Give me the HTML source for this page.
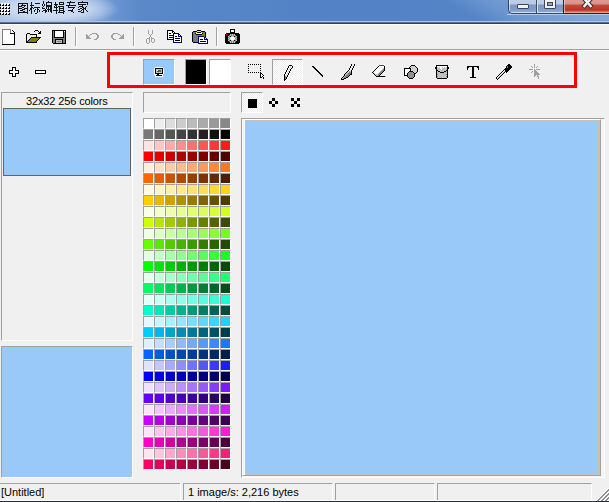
<!DOCTYPE html><html><head><meta charset="utf-8"><style>
html,body{margin:0;padding:0;}body{width:609px;height:502px;overflow:hidden;background:#f0f0f0;position:relative;font-family:"Liberation Sans",sans-serif;}
.t{position:absolute;white-space:nowrap;font-size:11px;color:#000;line-height:13px;}
svg{position:absolute;overflow:visible}.c{position:absolute;width:11px;height:11px;box-sizing:border-box;border-style:solid;border-width:1px;border-color:#a0a0a0 #fff #fff #a0a0a0}
</style></head><body>
<div style="position:absolute;left:0px;top:0px;width:609px;height:21px;background:radial-gradient(ellipse 70px 17px at 50px 9px,rgba(215,228,245,.95) 0%,rgba(205,220,242,.85) 55%,rgba(190,210,238,0) 100%),linear-gradient(90deg,#a9c0e2 0px,#9fb9df 60px,#83a6d8 100px,#6994d0 115px,#5a88c9 140px,#5383c6 300px,#5585c7 609px);"></div>
<div style="position:absolute;left:300px;top:0px;width:309px;height:21px;background:linear-gradient(31deg,rgba(200,220,245,0) 0%,rgba(200,220,245,0) 52%,rgba(200,220,245,.2) 64%,rgba(200,220,245,.36) 82%,rgba(200,220,245,.42) 100%);"></div>
<div style="position:absolute;left:0px;top:21px;width:609px;height:1px;background:#a9c3ea;"></div>
<div style="position:absolute;left:0px;top:22px;width:609px;height:1px;background:#5d7394;"></div>
<div style="position:absolute;left:0px;top:23px;width:609px;height:1px;background:#2d405f;"></div>
<div style="position:absolute;left:0px;top:24px;width:609px;height:1px;background:#ffffff;"></div>
<div style="position:absolute;left:75px;top:27px;width:1px;height:19px;background:#a0a0a0;"></div>
<div style="position:absolute;left:76px;top:27px;width:1px;height:20px;background:#fff;"></div>
<div style="position:absolute;left:133px;top:27px;width:1px;height:19px;background:#a0a0a0;"></div>
<div style="position:absolute;left:134px;top:27px;width:1px;height:20px;background:#fff;"></div>
<div style="position:absolute;left:216px;top:27px;width:1px;height:19px;background:#a0a0a0;"></div>
<div style="position:absolute;left:217px;top:27px;width:1px;height:20px;background:#fff;"></div>
<div style="position:absolute;left:0px;top:49px;width:609px;height:1px;background:#a0a0a0;"></div>
<div style="position:absolute;left:0px;top:50px;width:609px;height:1px;background:#fafafa;"></div>
<div style="position:absolute;left:107px;top:52px;width:470px;height:36px;border:3px solid #ff0000;box-sizing:border-box;"></div>
<div style="position:absolute;left:143px;top:59px;width:31px;height:25px;border-left:1px solid #a0a0a0;border-top:1px solid #a0a0a0;border-right:1px solid #fff;border-bottom:1px solid #fff;box-sizing:border-box;width:32px;height:26px;background:#99c9f9;"></div>
<div style="position:absolute;left:185px;top:59px;width:21px;height:25px;border-left:1px solid #a0a0a0;border-top:1px solid #a0a0a0;border-right:1px solid #fff;border-bottom:1px solid #fff;box-sizing:border-box;width:22px;height:26px;background:#000;"></div>
<div style="position:absolute;left:209px;top:59px;width:21px;height:25px;border-left:1px solid #a0a0a0;border-top:1px solid #a0a0a0;border-right:1px solid #fff;border-bottom:1px solid #fff;box-sizing:border-box;width:22px;height:26px;background:#fff;"></div>
<div style="position:absolute;left:272px;top:59px;width:30px;height:25px;border-left:1px solid #a0a0a0;border-top:1px solid #a0a0a0;border-right:1px solid #fff;border-bottom:1px solid #fff;box-sizing:border-box;width:31px;height:26px;"></div>
<div style="position:absolute;left:273px;top:60px;width:29px;height:24px;background-color:#fff;background-image:linear-gradient(45deg,#ececec 25%,transparent 25%,transparent 75%,#ececec 75%),linear-gradient(45deg,#ececec 25%,transparent 25%,transparent 75%,#ececec 75%);background-size:2px 2px;background-position:0 0,1px 1px;"></div>
<div style="position:absolute;left:1px;top:92px;width:131px;height:248px;border-left:1px solid #a0a0a0;border-top:1px solid #a0a0a0;border-right:1px solid #fff;border-bottom:1px solid #fff;box-sizing:border-box;width:132px;height:249px;"></div>
<div class="t" style="left:26px;top:95px;letter-spacing:-0.13px">32x32 256 colors</div>
<div style="position:absolute;left:3px;top:108px;width:128px;height:68px;background:#99c9f9;border:1px solid #646464;box-sizing:border-box;"></div>
<div style="position:absolute;left:1px;top:346px;width:131px;height:131px;border-left:1px solid #a0a0a0;border-top:1px solid #a0a0a0;border-right:1px solid #fff;border-bottom:1px solid #fff;box-sizing:border-box;width:132px;height:132px;background:#99c9f9;"></div>
<div style="position:absolute;left:143px;top:92px;width:87px;height:20px;border-left:1px solid #a0a0a0;border-top:1px solid #a0a0a0;border-right:1px solid #fff;border-bottom:1px solid #fff;box-sizing:border-box;width:88px;height:21px;"></div>
<i class="c" style="left:143px;top:118px;background:#ffffff"></i>
<i class="c" style="left:154px;top:118px;background:#eeeeee"></i>
<i class="c" style="left:165px;top:118px;background:#dddddd"></i>
<i class="c" style="left:176px;top:118px;background:#cccccc"></i>
<i class="c" style="left:187px;top:118px;background:#bbbbbb"></i>
<i class="c" style="left:198px;top:118px;background:#aaaaaa"></i>
<i class="c" style="left:209px;top:118px;background:#999999"></i>
<i class="c" style="left:220px;top:118px;background:#888888"></i>
<i class="c" style="left:143px;top:129px;background:#777777"></i>
<i class="c" style="left:154px;top:129px;background:#666666"></i>
<i class="c" style="left:165px;top:129px;background:#555555"></i>
<i class="c" style="left:176px;top:129px;background:#444444"></i>
<i class="c" style="left:187px;top:129px;background:#333333"></i>
<i class="c" style="left:198px;top:129px;background:#222222"></i>
<i class="c" style="left:209px;top:129px;background:#111111"></i>
<i class="c" style="left:220px;top:129px;background:#000000"></i>
<i class="c" style="left:143px;top:140px;background:#ffe3e3"></i>
<i class="c" style="left:154px;top:140px;background:#ffc6c6"></i>
<i class="c" style="left:165px;top:140px;background:#ffaaaa"></i>
<i class="c" style="left:176px;top:140px;background:#ff8e8e"></i>
<i class="c" style="left:187px;top:140px;background:#ff7171"></i>
<i class="c" style="left:198px;top:140px;background:#ff5555"></i>
<i class="c" style="left:209px;top:140px;background:#ff3939"></i>
<i class="c" style="left:220px;top:140px;background:#ff1c1c"></i>
<i class="c" style="left:143px;top:151px;background:#ff0000"></i>
<i class="c" style="left:154px;top:151px;background:#e60000"></i>
<i class="c" style="left:165px;top:151px;background:#cc0000"></i>
<i class="c" style="left:176px;top:151px;background:#b20000"></i>
<i class="c" style="left:187px;top:151px;background:#990000"></i>
<i class="c" style="left:198px;top:151px;background:#800000"></i>
<i class="c" style="left:209px;top:151px;background:#660000"></i>
<i class="c" style="left:220px;top:151px;background:#4c0000"></i>
<i class="c" style="left:143px;top:162px;background:#ffeee3"></i>
<i class="c" style="left:154px;top:162px;background:#ffddc6"></i>
<i class="c" style="left:165px;top:162px;background:#ffccaa"></i>
<i class="c" style="left:176px;top:162px;background:#ffbb8e"></i>
<i class="c" style="left:187px;top:162px;background:#ffaa71"></i>
<i class="c" style="left:198px;top:162px;background:#ff9955"></i>
<i class="c" style="left:209px;top:162px;background:#ff8839"></i>
<i class="c" style="left:220px;top:162px;background:#ff771c"></i>
<i class="c" style="left:143px;top:173px;background:#ff6600"></i>
<i class="c" style="left:154px;top:173px;background:#e65c00"></i>
<i class="c" style="left:165px;top:173px;background:#cc5200"></i>
<i class="c" style="left:176px;top:173px;background:#b24700"></i>
<i class="c" style="left:187px;top:173px;background:#993d00"></i>
<i class="c" style="left:198px;top:173px;background:#803300"></i>
<i class="c" style="left:209px;top:173px;background:#662900"></i>
<i class="c" style="left:220px;top:173px;background:#4c1f00"></i>
<i class="c" style="left:143px;top:184px;background:#fff9e3"></i>
<i class="c" style="left:154px;top:184px;background:#fff4c6"></i>
<i class="c" style="left:165px;top:184px;background:#ffeeaa"></i>
<i class="c" style="left:176px;top:184px;background:#ffe88e"></i>
<i class="c" style="left:187px;top:184px;background:#ffe371"></i>
<i class="c" style="left:198px;top:184px;background:#ffdd55"></i>
<i class="c" style="left:209px;top:184px;background:#ffd739"></i>
<i class="c" style="left:220px;top:184px;background:#ffd21c"></i>
<i class="c" style="left:143px;top:195px;background:#ffcc00"></i>
<i class="c" style="left:154px;top:195px;background:#e6b800"></i>
<i class="c" style="left:165px;top:195px;background:#cca300"></i>
<i class="c" style="left:176px;top:195px;background:#b28f00"></i>
<i class="c" style="left:187px;top:195px;background:#997a00"></i>
<i class="c" style="left:198px;top:195px;background:#806600"></i>
<i class="c" style="left:209px;top:195px;background:#665200"></i>
<i class="c" style="left:220px;top:195px;background:#4c3d00"></i>
<i class="c" style="left:143px;top:206px;background:#f9ffe3"></i>
<i class="c" style="left:154px;top:206px;background:#f4ffc6"></i>
<i class="c" style="left:165px;top:206px;background:#eeffaa"></i>
<i class="c" style="left:176px;top:206px;background:#e8ff8e"></i>
<i class="c" style="left:187px;top:206px;background:#e3ff71"></i>
<i class="c" style="left:198px;top:206px;background:#ddff55"></i>
<i class="c" style="left:209px;top:206px;background:#d7ff39"></i>
<i class="c" style="left:220px;top:206px;background:#d2ff1c"></i>
<i class="c" style="left:143px;top:217px;background:#ccff00"></i>
<i class="c" style="left:154px;top:217px;background:#b8e600"></i>
<i class="c" style="left:165px;top:217px;background:#a3cc00"></i>
<i class="c" style="left:176px;top:217px;background:#8fb200"></i>
<i class="c" style="left:187px;top:217px;background:#7a9900"></i>
<i class="c" style="left:198px;top:217px;background:#668000"></i>
<i class="c" style="left:209px;top:217px;background:#526600"></i>
<i class="c" style="left:220px;top:217px;background:#3d4c00"></i>
<i class="c" style="left:143px;top:228px;background:#eeffe3"></i>
<i class="c" style="left:154px;top:228px;background:#ddffc6"></i>
<i class="c" style="left:165px;top:228px;background:#ccffaa"></i>
<i class="c" style="left:176px;top:228px;background:#bbff8e"></i>
<i class="c" style="left:187px;top:228px;background:#aaff71"></i>
<i class="c" style="left:198px;top:228px;background:#99ff55"></i>
<i class="c" style="left:209px;top:228px;background:#88ff39"></i>
<i class="c" style="left:220px;top:228px;background:#77ff1c"></i>
<i class="c" style="left:143px;top:239px;background:#66ff00"></i>
<i class="c" style="left:154px;top:239px;background:#5ce600"></i>
<i class="c" style="left:165px;top:239px;background:#52cc00"></i>
<i class="c" style="left:176px;top:239px;background:#47b200"></i>
<i class="c" style="left:187px;top:239px;background:#3d9900"></i>
<i class="c" style="left:198px;top:239px;background:#338000"></i>
<i class="c" style="left:209px;top:239px;background:#296600"></i>
<i class="c" style="left:220px;top:239px;background:#1f4c00"></i>
<i class="c" style="left:143px;top:250px;background:#e3ffe3"></i>
<i class="c" style="left:154px;top:250px;background:#c6ffc6"></i>
<i class="c" style="left:165px;top:250px;background:#aaffaa"></i>
<i class="c" style="left:176px;top:250px;background:#8eff8e"></i>
<i class="c" style="left:187px;top:250px;background:#71ff71"></i>
<i class="c" style="left:198px;top:250px;background:#55ff55"></i>
<i class="c" style="left:209px;top:250px;background:#39ff39"></i>
<i class="c" style="left:220px;top:250px;background:#1cff1c"></i>
<i class="c" style="left:143px;top:261px;background:#00ff00"></i>
<i class="c" style="left:154px;top:261px;background:#00e600"></i>
<i class="c" style="left:165px;top:261px;background:#00cc00"></i>
<i class="c" style="left:176px;top:261px;background:#00b200"></i>
<i class="c" style="left:187px;top:261px;background:#009900"></i>
<i class="c" style="left:198px;top:261px;background:#008000"></i>
<i class="c" style="left:209px;top:261px;background:#006600"></i>
<i class="c" style="left:220px;top:261px;background:#004c00"></i>
<i class="c" style="left:143px;top:272px;background:#e3ffee"></i>
<i class="c" style="left:154px;top:272px;background:#c6ffdd"></i>
<i class="c" style="left:165px;top:272px;background:#aaffcc"></i>
<i class="c" style="left:176px;top:272px;background:#8effbb"></i>
<i class="c" style="left:187px;top:272px;background:#71ffaa"></i>
<i class="c" style="left:198px;top:272px;background:#55ff99"></i>
<i class="c" style="left:209px;top:272px;background:#39ff88"></i>
<i class="c" style="left:220px;top:272px;background:#1cff77"></i>
<i class="c" style="left:143px;top:283px;background:#00ff66"></i>
<i class="c" style="left:154px;top:283px;background:#00e65c"></i>
<i class="c" style="left:165px;top:283px;background:#00cc52"></i>
<i class="c" style="left:176px;top:283px;background:#00b247"></i>
<i class="c" style="left:187px;top:283px;background:#00993d"></i>
<i class="c" style="left:198px;top:283px;background:#008033"></i>
<i class="c" style="left:209px;top:283px;background:#006629"></i>
<i class="c" style="left:220px;top:283px;background:#004c1f"></i>
<i class="c" style="left:143px;top:294px;background:#e3fff9"></i>
<i class="c" style="left:154px;top:294px;background:#c6fff4"></i>
<i class="c" style="left:165px;top:294px;background:#aaffee"></i>
<i class="c" style="left:176px;top:294px;background:#8effe8"></i>
<i class="c" style="left:187px;top:294px;background:#71ffe3"></i>
<i class="c" style="left:198px;top:294px;background:#55ffdd"></i>
<i class="c" style="left:209px;top:294px;background:#39ffd7"></i>
<i class="c" style="left:220px;top:294px;background:#1cffd2"></i>
<i class="c" style="left:143px;top:305px;background:#00ffcc"></i>
<i class="c" style="left:154px;top:305px;background:#00e6b8"></i>
<i class="c" style="left:165px;top:305px;background:#00cca3"></i>
<i class="c" style="left:176px;top:305px;background:#00b28f"></i>
<i class="c" style="left:187px;top:305px;background:#00997a"></i>
<i class="c" style="left:198px;top:305px;background:#008066"></i>
<i class="c" style="left:209px;top:305px;background:#006652"></i>
<i class="c" style="left:220px;top:305px;background:#004c3d"></i>
<i class="c" style="left:143px;top:316px;background:#e3f9ff"></i>
<i class="c" style="left:154px;top:316px;background:#c6f4ff"></i>
<i class="c" style="left:165px;top:316px;background:#aaeeff"></i>
<i class="c" style="left:176px;top:316px;background:#8ee8ff"></i>
<i class="c" style="left:187px;top:316px;background:#71e3ff"></i>
<i class="c" style="left:198px;top:316px;background:#55ddff"></i>
<i class="c" style="left:209px;top:316px;background:#39d7ff"></i>
<i class="c" style="left:220px;top:316px;background:#1cd2ff"></i>
<i class="c" style="left:143px;top:327px;background:#00ccff"></i>
<i class="c" style="left:154px;top:327px;background:#00b8e6"></i>
<i class="c" style="left:165px;top:327px;background:#00a3cc"></i>
<i class="c" style="left:176px;top:327px;background:#008fb2"></i>
<i class="c" style="left:187px;top:327px;background:#007a99"></i>
<i class="c" style="left:198px;top:327px;background:#006680"></i>
<i class="c" style="left:209px;top:327px;background:#005266"></i>
<i class="c" style="left:220px;top:327px;background:#003d4c"></i>
<i class="c" style="left:143px;top:338px;background:#e3eeff"></i>
<i class="c" style="left:154px;top:338px;background:#c6ddff"></i>
<i class="c" style="left:165px;top:338px;background:#aaccff"></i>
<i class="c" style="left:176px;top:338px;background:#8ebbff"></i>
<i class="c" style="left:187px;top:338px;background:#71aaff"></i>
<i class="c" style="left:198px;top:338px;background:#5599ff"></i>
<i class="c" style="left:209px;top:338px;background:#3988ff"></i>
<i class="c" style="left:220px;top:338px;background:#1c77ff"></i>
<i class="c" style="left:143px;top:349px;background:#0066ff"></i>
<i class="c" style="left:154px;top:349px;background:#005ce6"></i>
<i class="c" style="left:165px;top:349px;background:#0052cc"></i>
<i class="c" style="left:176px;top:349px;background:#0047b2"></i>
<i class="c" style="left:187px;top:349px;background:#003d99"></i>
<i class="c" style="left:198px;top:349px;background:#003380"></i>
<i class="c" style="left:209px;top:349px;background:#002966"></i>
<i class="c" style="left:220px;top:349px;background:#001f4c"></i>
<i class="c" style="left:143px;top:360px;background:#e3e3ff"></i>
<i class="c" style="left:154px;top:360px;background:#c6c6ff"></i>
<i class="c" style="left:165px;top:360px;background:#aaaaff"></i>
<i class="c" style="left:176px;top:360px;background:#8e8eff"></i>
<i class="c" style="left:187px;top:360px;background:#7171ff"></i>
<i class="c" style="left:198px;top:360px;background:#5555ff"></i>
<i class="c" style="left:209px;top:360px;background:#3939ff"></i>
<i class="c" style="left:220px;top:360px;background:#1c1cff"></i>
<i class="c" style="left:143px;top:371px;background:#0000ff"></i>
<i class="c" style="left:154px;top:371px;background:#0000e6"></i>
<i class="c" style="left:165px;top:371px;background:#0000cc"></i>
<i class="c" style="left:176px;top:371px;background:#0000b2"></i>
<i class="c" style="left:187px;top:371px;background:#000099"></i>
<i class="c" style="left:198px;top:371px;background:#000080"></i>
<i class="c" style="left:209px;top:371px;background:#000066"></i>
<i class="c" style="left:220px;top:371px;background:#00004c"></i>
<i class="c" style="left:143px;top:382px;background:#eee3ff"></i>
<i class="c" style="left:154px;top:382px;background:#ddc6ff"></i>
<i class="c" style="left:165px;top:382px;background:#ccaaff"></i>
<i class="c" style="left:176px;top:382px;background:#bb8eff"></i>
<i class="c" style="left:187px;top:382px;background:#aa71ff"></i>
<i class="c" style="left:198px;top:382px;background:#9955ff"></i>
<i class="c" style="left:209px;top:382px;background:#8839ff"></i>
<i class="c" style="left:220px;top:382px;background:#771cff"></i>
<i class="c" style="left:143px;top:393px;background:#6600ff"></i>
<i class="c" style="left:154px;top:393px;background:#5c00e6"></i>
<i class="c" style="left:165px;top:393px;background:#5200cc"></i>
<i class="c" style="left:176px;top:393px;background:#4700b2"></i>
<i class="c" style="left:187px;top:393px;background:#3d0099"></i>
<i class="c" style="left:198px;top:393px;background:#330080"></i>
<i class="c" style="left:209px;top:393px;background:#290066"></i>
<i class="c" style="left:220px;top:393px;background:#1f004c"></i>
<i class="c" style="left:143px;top:404px;background:#f9e3ff"></i>
<i class="c" style="left:154px;top:404px;background:#f4c6ff"></i>
<i class="c" style="left:165px;top:404px;background:#eeaaff"></i>
<i class="c" style="left:176px;top:404px;background:#e88eff"></i>
<i class="c" style="left:187px;top:404px;background:#e371ff"></i>
<i class="c" style="left:198px;top:404px;background:#dd55ff"></i>
<i class="c" style="left:209px;top:404px;background:#d739ff"></i>
<i class="c" style="left:220px;top:404px;background:#d21cff"></i>
<i class="c" style="left:143px;top:415px;background:#cc00ff"></i>
<i class="c" style="left:154px;top:415px;background:#b800e6"></i>
<i class="c" style="left:165px;top:415px;background:#a300cc"></i>
<i class="c" style="left:176px;top:415px;background:#8f00b2"></i>
<i class="c" style="left:187px;top:415px;background:#7a0099"></i>
<i class="c" style="left:198px;top:415px;background:#660080"></i>
<i class="c" style="left:209px;top:415px;background:#520066"></i>
<i class="c" style="left:220px;top:415px;background:#3d004c"></i>
<i class="c" style="left:143px;top:426px;background:#ffe3f9"></i>
<i class="c" style="left:154px;top:426px;background:#ffc6f4"></i>
<i class="c" style="left:165px;top:426px;background:#ffaaee"></i>
<i class="c" style="left:176px;top:426px;background:#ff8ee8"></i>
<i class="c" style="left:187px;top:426px;background:#ff71e3"></i>
<i class="c" style="left:198px;top:426px;background:#ff55dd"></i>
<i class="c" style="left:209px;top:426px;background:#ff39d7"></i>
<i class="c" style="left:220px;top:426px;background:#ff1cd2"></i>
<i class="c" style="left:143px;top:437px;background:#ff00cc"></i>
<i class="c" style="left:154px;top:437px;background:#e600b8"></i>
<i class="c" style="left:165px;top:437px;background:#cc00a3"></i>
<i class="c" style="left:176px;top:437px;background:#b2008f"></i>
<i class="c" style="left:187px;top:437px;background:#99007a"></i>
<i class="c" style="left:198px;top:437px;background:#800066"></i>
<i class="c" style="left:209px;top:437px;background:#660052"></i>
<i class="c" style="left:220px;top:437px;background:#4c003d"></i>
<i class="c" style="left:143px;top:448px;background:#ffe3ee"></i>
<i class="c" style="left:154px;top:448px;background:#ffc6dd"></i>
<i class="c" style="left:165px;top:448px;background:#ffaacc"></i>
<i class="c" style="left:176px;top:448px;background:#ff8ebb"></i>
<i class="c" style="left:187px;top:448px;background:#ff71aa"></i>
<i class="c" style="left:198px;top:448px;background:#ff5599"></i>
<i class="c" style="left:209px;top:448px;background:#ff3988"></i>
<i class="c" style="left:220px;top:448px;background:#ff1c77"></i>
<i class="c" style="left:143px;top:459px;background:#ff0066"></i>
<i class="c" style="left:154px;top:459px;background:#e6005c"></i>
<i class="c" style="left:165px;top:459px;background:#cc0052"></i>
<i class="c" style="left:176px;top:459px;background:#b20047"></i>
<i class="c" style="left:187px;top:459px;background:#99003d"></i>
<i class="c" style="left:198px;top:459px;background:#800033"></i>
<i class="c" style="left:209px;top:459px;background:#660029"></i>
<i class="c" style="left:220px;top:459px;background:#4c001f"></i>
<div style="position:absolute;left:241px;top:92px;width:21px;height:20px;border-left:1px solid #a0a0a0;border-top:1px solid #a0a0a0;border-right:1px solid #fff;border-bottom:1px solid #fff;box-sizing:border-box;width:22px;height:21px;"></div>
<div style="position:absolute;left:242px;top:93px;width:20px;height:19px;background-color:#fff;background-image:linear-gradient(45deg,#ececec 25%,transparent 25%,transparent 75%,#ececec 75%),linear-gradient(45deg,#ececec 25%,transparent 25%,transparent 75%,#ececec 75%);background-size:2px 2px;background-position:0 0,1px 1px;"></div>
<div style="position:absolute;left:248px;top:99px;width:9px;height:9px;background:#000;"></div>
<div style="position:absolute;left:241px;top:118px;width:363px;height:359px;border-left:1px solid #a0a0a0;border-top:1px solid #a0a0a0;border-right:1px solid #fff;border-bottom:1px solid #fff;box-sizing:border-box;width:364px;height:360px;"></div>
<div style="position:absolute;left:242px;top:119px;width:359px;height:357px;border-left:1px solid #fff;border-top:1px solid #fff;border-right:1px solid #a0a0a0;border-bottom:1px solid #a0a0a0;box-sizing:border-box;"></div>
<div style="position:absolute;left:244px;top:120px;width:1px;height:355px;background:#fff;"></div>
<div style="position:absolute;left:245px;top:120px;width:355px;height:355px;background:#c0c0c0;"></div>
<div style="position:absolute;left:245px;top:120px;width:354px;height:354px;background:#99c9f9;border:1px solid #c8c0b8;box-sizing:border-box;"></div>
<div style="position:absolute;left:601px;top:119px;width:3px;height:357px;background:#f6f6f6;"></div>
<div style="position:absolute;left:243px;top:476px;width:358px;height:1px;background:#f6f6f6;"></div>
<div style="position:absolute;left:0px;top:483px;width:180px;height:1px;background:#a0a0a0;"></div>
<div style="position:absolute;left:180px;top:483px;width:1px;height:18px;background:#fff;"></div>
<div style="position:absolute;left:183px;top:483px;width:149px;height:17px;border-left:1px solid #a0a0a0;border-top:1px solid #a0a0a0;border-right:1px solid #fff;border-bottom:1px solid #fff;box-sizing:border-box;width:150px;height:18px;"></div>
<div style="position:absolute;left:335px;top:483px;width:99px;height:17px;border-left:1px solid #a0a0a0;border-top:1px solid #a0a0a0;border-right:1px solid #fff;border-bottom:1px solid #fff;box-sizing:border-box;width:100px;height:18px;"></div>
<div style="position:absolute;left:437px;top:483px;width:154px;height:17px;border-left:1px solid #a0a0a0;border-top:1px solid #a0a0a0;border-right:1px solid #fff;border-bottom:1px solid #fff;box-sizing:border-box;width:155px;height:18px;"></div>
<div style="position:absolute;left:0px;top:500px;width:609px;height:1px;background:#fff;"></div>
<div style="position:absolute;left:0px;top:501px;width:609px;height:1px;background:#1f3350;"></div>
<div class="t" style="left:1px;top:486px;">[Untitled]</div>
<div class="t" style="left:188px;top:486px;">1 image/s: 2,216 bytes</div>
<svg style="left:0px;top:27px" width="16" height="18" shape-rendering="crispEdges"><path fill="#808080" d="M2 2h9v1h-9zM2 3h1v1h-1zM10 3h1v1h-1zM2 4h1v1h-1zM10 4h1v1h-1zM2 5h1v1h-1zM10 5h1v1h-1zM2 6h1v1h-1zM2 7h1v1h-1zM2 8h1v1h-1zM2 9h1v1h-1zM2 10h1v1h-1zM2 11h1v1h-1zM2 12h1v1h-1zM2 13h1v1h-1zM2 14h1v1h-1zM2 15h1v1h-1zM2 16h1v1h-1z"/><path fill="#ffffff" d="M11 2h1v1h-1zM3 3h7v1h-7zM11 3h1v1h-1zM3 4h7v1h-7zM11 4h2v1h-2zM3 5h7v1h-7zM11 5h3v1h-3zM3 6h7v1h-7zM3 7h11v1h-11zM3 8h11v1h-11zM3 9h11v1h-11zM3 10h11v1h-11zM3 11h11v1h-11zM3 12h11v1h-11zM3 13h11v1h-11zM3 14h11v1h-11zM3 15h11v1h-11zM3 16h11v1h-11z"/><path fill="#000000" d="M12 3h1v1h-1zM13 4h1v1h-1zM14 5h1v1h-1zM10 6h5v1h-5zM14 7h1v1h-1zM14 8h1v1h-1zM14 9h1v1h-1zM14 10h1v1h-1zM14 11h1v1h-1zM14 12h1v1h-1zM14 13h1v1h-1zM14 14h1v1h-1zM14 15h1v1h-1zM14 16h1v1h-1zM2 17h13v1h-13z"/></svg>
<svg style="left:24px;top:28px" width="17" height="15" shape-rendering="crispEdges"><path fill="#000000" d="M11 2h3v1h-3zM10 3h1v1h-1zM14 3h1v1h-1zM16 3h1v1h-1zM15 4h2v1h-2zM3 5h3v1h-3zM14 5h3v1h-3zM2 6h1v1h-1zM6 6h7v1h-7zM2 7h1v1h-1zM12 7h1v1h-1zM2 8h1v1h-1zM12 8h1v1h-1zM2 9h1v1h-1zM7 9h10v1h-10zM2 10h1v1h-1zM6 10h1v1h-1zM15 10h1v1h-1zM2 11h1v1h-1zM5 11h1v1h-1zM14 11h1v1h-1zM2 12h1v1h-1zM4 12h1v1h-1zM13 12h1v1h-1zM2 13h2v1h-2zM12 13h1v1h-1zM2 14h11v1h-11z"/><path fill="#ffff00" d="M3 6h1v1h-1zM5 6h1v1h-1zM4 7h1v1h-1zM6 7h1v1h-1zM8 7h1v1h-1zM10 7h1v1h-1zM3 8h1v1h-1zM5 8h1v1h-1zM7 8h1v1h-1zM9 8h1v1h-1zM11 8h1v1h-1zM4 9h1v1h-1zM6 9h1v1h-1zM3 10h1v1h-1zM5 10h1v1h-1zM4 11h1v1h-1zM3 12h1v1h-1z"/><path fill="#ffffff" d="M4 6h1v1h-1zM3 7h1v1h-1zM5 7h1v1h-1zM7 7h1v1h-1zM9 7h1v1h-1zM11 7h1v1h-1zM4 8h1v1h-1zM6 8h1v1h-1zM8 8h1v1h-1zM10 8h1v1h-1zM3 9h1v1h-1zM5 9h1v1h-1zM4 10h1v1h-1zM3 11h1v1h-1z"/><path fill="#808000" d="M7 10h8v1h-8zM6 11h8v1h-8zM5 12h8v1h-8zM4 13h8v1h-8z"/></svg>
<svg style="left:50px;top:28px" width="16" height="16" shape-rendering="crispEdges"><path fill="#000000" d="M2 2h14v1h-14zM2 3h1v1h-1zM4 3h1v1h-1zM13 3h1v1h-1zM15 3h1v1h-1zM2 4h1v1h-1zM4 4h1v1h-1zM13 4h1v1h-1zM15 4h1v1h-1zM2 5h1v1h-1zM4 5h1v1h-1zM13 5h1v1h-1zM15 5h1v1h-1zM2 6h1v1h-1zM4 6h1v1h-1zM13 6h1v1h-1zM15 6h1v1h-1zM2 7h1v1h-1zM4 7h1v1h-1zM13 7h1v1h-1zM15 7h1v1h-1zM2 8h1v1h-1zM4 8h1v1h-1zM13 8h1v1h-1zM15 8h1v1h-1zM2 9h1v1h-1zM4 9h10v1h-10zM15 9h1v1h-1zM2 10h1v1h-1zM15 10h1v1h-1zM2 11h1v1h-1zM5 11h8v1h-8zM15 11h1v1h-1zM2 12h1v1h-1zM5 12h1v1h-1zM12 12h1v1h-1zM15 12h1v1h-1zM2 13h1v1h-1zM5 13h1v1h-1zM12 13h1v1h-1zM15 13h1v1h-1zM2 14h1v1h-1zM5 14h1v1h-1zM12 14h1v1h-1zM15 14h1v1h-1zM3 15h13v1h-13z"/><path fill="#808080" d="M3 3h1v1h-1zM3 4h1v1h-1zM14 4h1v1h-1zM3 5h1v1h-1zM14 5h1v1h-1zM3 6h1v1h-1zM14 6h1v1h-1zM3 7h1v1h-1zM14 7h1v1h-1zM3 8h1v1h-1zM14 8h1v1h-1zM3 9h1v1h-1zM14 9h1v1h-1zM3 10h12v1h-12zM3 11h2v1h-2zM13 11h2v1h-2zM3 12h2v1h-2zM13 12h2v1h-2zM3 13h2v1h-2zM7 13h4v1h-4zM13 13h2v1h-2zM3 14h2v1h-2zM13 14h2v1h-2z"/><path fill="#ffffff" d="M5 3h8v1h-8zM14 3h1v1h-1zM5 4h8v1h-8zM5 5h8v1h-8zM5 6h8v1h-8zM5 7h8v1h-8zM5 8h8v1h-8z"/><path fill="#c0c0c0" d="M6 12h6v1h-6zM6 13h1v1h-1zM11 13h1v1h-1zM6 14h6v1h-6z"/><path fill="#f8f8f8" d="M2 15h1v1h-1z"/></svg>
<svg style="left:84px;top:30px" width="15" height="10" shape-rendering="crispEdges"><path fill="#a0a0a0" d="M8 3h5v1h-5zM2 4h1v1h-1zM6 4h2v1h-2zM12 4h2v1h-2zM2 5h2v1h-2zM5 5h1v1h-1zM13 5h2v1h-2zM2 6h3v1h-3zM13 6h2v1h-2zM2 7h4v1h-4zM13 7h2v1h-2zM2 8h5v1h-5zM12 8h2v1h-2zM10 9h3v1h-3z"/></svg>
<svg style="left:109px;top:30px" width="15" height="10" shape-rendering="crispEdges"><path fill="#a0a0a0" d="M4 3h5v1h-5zM3 4h2v1h-2zM9 4h2v1h-2zM14 4h1v1h-1zM2 5h2v1h-2zM11 5h1v1h-1zM13 5h2v1h-2zM2 6h2v1h-2zM12 6h3v1h-3zM2 7h2v1h-2zM11 7h4v1h-4zM3 8h2v1h-2zM10 8h5v1h-5zM4 9h3v1h-3z"/></svg>
<svg style="left:142px;top:28px" width="13" height="16" shape-rendering="crispEdges"><path fill="#a0a0a0" d="M6 2h1v1h-1zM10 2h1v1h-1zM6 3h1v1h-1zM10 3h1v1h-1zM6 4h1v1h-1zM10 4h1v1h-1zM6 5h1v1h-1zM10 5h1v1h-1zM7 6h1v1h-1zM9 6h1v1h-1zM8 7h1v1h-1zM8 8h1v1h-1zM7 9h1v1h-1zM9 9h1v1h-1zM5 10h3v1h-3zM9 10h3v1h-3zM4 11h1v1h-1zM7 11h1v1h-1zM9 11h1v1h-1zM12 11h1v1h-1zM4 12h1v1h-1zM7 12h1v1h-1zM9 12h1v1h-1zM12 12h1v1h-1zM4 13h1v1h-1zM7 13h1v1h-1zM9 13h1v1h-1zM12 13h1v1h-1zM4 14h1v1h-1zM7 14h1v1h-1zM10 14h2v1h-2zM5 15h2v1h-2z"/></svg>
<svg style="left:164px;top:28px" width="18" height="15" shape-rendering="crispEdges"><path fill="#000000" d="M3 2h6v1h-6zM3 3h1v1h-1zM8 3h2v1h-2zM3 4h1v1h-1zM8 4h1v1h-1zM10 4h1v1h-1zM3 5h1v1h-1zM5 5h2v1h-2zM3 6h1v1h-1zM3 7h1v1h-1zM5 7h4v1h-4zM3 8h1v1h-1zM11 8h2v1h-2zM3 9h1v1h-1zM5 9h4v1h-4zM3 10h1v1h-1zM11 10h5v1h-5zM3 11h6v1h-6zM11 12h5v1h-5z"/><path fill="#ffffff" d="M4 3h4v1h-4zM4 4h4v1h-4zM9 4h1v1h-1zM4 5h1v1h-1zM7 5h2v1h-2zM4 6h5v1h-5zM10 6h4v1h-4zM4 7h1v1h-1zM10 7h4v1h-4zM15 7h1v1h-1zM4 8h5v1h-5zM10 8h1v1h-1zM13 8h1v1h-1zM4 9h1v1h-1zM10 9h7v1h-7zM4 10h5v1h-5zM10 10h1v1h-1zM16 10h1v1h-1zM10 11h7v1h-7zM10 12h1v1h-1zM16 12h1v1h-1zM10 13h7v1h-7z"/><path fill="#000080" d="M9 5h6v1h-6zM9 6h1v1h-1zM14 6h2v1h-2zM9 7h1v1h-1zM14 7h1v1h-1zM16 7h1v1h-1zM9 8h1v1h-1zM14 8h4v1h-4zM9 9h1v1h-1zM17 9h1v1h-1zM9 10h1v1h-1zM17 10h1v1h-1zM9 11h1v1h-1zM17 11h1v1h-1zM9 12h1v1h-1zM17 12h1v1h-1zM9 13h1v1h-1zM17 13h1v1h-1zM9 14h9v1h-9z"/></svg>
<svg style="left:189px;top:28px" width="19" height="16" shape-rendering="crispEdges"><path fill="#000000" d="M8 2h4v1h-4zM4 3h4v1h-4zM12 3h4v1h-4zM3 4h1v1h-1zM8 4h4v1h-4zM16 4h1v1h-1zM3 5h1v1h-1zM6 5h1v1h-1zM13 5h1v1h-1zM16 5h1v1h-1zM3 6h1v1h-1zM7 6h6v1h-6zM16 6h1v1h-1zM3 7h1v1h-1zM16 7h1v1h-1zM3 8h1v1h-1zM16 8h1v1h-1zM3 9h1v1h-1zM3 10h1v1h-1zM3 11h1v1h-1zM11 11h3v1h-3zM3 12h1v1h-1zM3 13h1v1h-1zM11 13h6v1h-6zM4 14h5v1h-5z"/><path fill="#ffff00" d="M8 3h4v1h-4zM7 4h1v1h-1zM12 4h1v1h-1z"/><path fill="#808000" d="M4 4h1v1h-1zM6 4h1v1h-1zM14 4h1v1h-1zM5 5h1v1h-1zM15 5h1v1h-1zM4 6h1v1h-1zM6 6h1v1h-1zM13 6h1v1h-1zM15 6h1v1h-1zM5 7h1v1h-1zM7 7h1v1h-1zM9 7h1v1h-1zM11 7h1v1h-1zM13 7h1v1h-1zM15 7h1v1h-1zM4 8h1v1h-1zM6 8h1v1h-1zM8 8h1v1h-1zM15 8h1v1h-1zM5 9h1v1h-1zM7 9h1v1h-1zM4 10h1v1h-1zM6 10h1v1h-1zM8 10h1v1h-1zM5 11h1v1h-1zM7 11h1v1h-1zM4 12h1v1h-1zM6 12h1v1h-1zM8 12h1v1h-1zM5 13h1v1h-1zM7 13h1v1h-1z"/><path fill="#808080" d="M5 4h1v1h-1zM13 4h1v1h-1zM15 4h1v1h-1zM4 5h1v1h-1zM14 5h1v1h-1zM5 6h1v1h-1zM14 6h1v1h-1zM4 7h1v1h-1zM6 7h1v1h-1zM8 7h1v1h-1zM10 7h1v1h-1zM12 7h1v1h-1zM14 7h1v1h-1zM5 8h1v1h-1zM7 8h1v1h-1zM4 9h1v1h-1zM6 9h1v1h-1zM8 9h1v1h-1zM5 10h1v1h-1zM7 10h1v1h-1zM4 11h1v1h-1zM6 11h1v1h-1zM8 11h1v1h-1zM5 12h1v1h-1zM7 12h1v1h-1zM4 13h1v1h-1zM6 13h1v1h-1zM8 13h1v1h-1z"/><path fill="#ffffff" d="M7 5h6v1h-6zM10 9h5v1h-5zM10 10h5v1h-5zM16 10h1v1h-1zM10 11h1v1h-1zM14 11h1v1h-1zM10 12h8v1h-8zM10 13h1v1h-1zM17 13h1v1h-1zM10 14h8v1h-8z"/><path fill="#000080" d="M9 8h6v1h-6zM9 9h1v1h-1zM15 9h2v1h-2zM9 10h1v1h-1zM15 10h1v1h-1zM17 10h1v1h-1zM9 11h1v1h-1zM15 11h4v1h-4zM9 12h1v1h-1zM18 12h1v1h-1zM9 13h1v1h-1zM18 13h1v1h-1zM9 14h1v1h-1zM18 14h1v1h-1zM9 15h10v1h-10z"/></svg>
<svg style="left:222px;top:27px" width="19" height="17" shape-rendering="crispEdges"><path fill="#000000" d="M8 2h5v1h-5zM8 3h1v1h-1zM12 3h1v1h-1zM8 4h1v1h-1zM12 4h1v1h-1zM8 5h5v1h-5zM4 6h13v1h-13zM3 7h1v1h-1zM5 7h3v1h-3zM13 7h5v1h-5zM3 8h4v1h-4zM14 8h4v1h-4zM3 9h3v1h-3zM8 9h1v1h-1zM12 9h1v1h-1zM15 9h3v1h-3zM3 10h3v1h-3zM15 10h3v1h-3zM3 11h3v1h-3zM15 11h3v1h-3zM3 12h3v1h-3zM15 12h3v1h-3zM3 13h3v1h-3zM8 13h1v1h-1zM12 13h1v1h-1zM15 13h3v1h-3zM3 14h4v1h-4zM14 14h4v1h-4zM3 15h5v1h-5zM13 15h5v1h-5zM4 16h13v1h-13z"/><path fill="#ffffff" d="M9 3h3v1h-3zM9 4h3v1h-3zM9 10h3v1h-3zM8 11h5v1h-5zM9 12h3v1h-3z"/><path fill="#ff0000" d="M4 7h1v1h-1z"/><path fill="#c0c0c0" d="M8 7h1v1h-1zM10 7h1v1h-1zM12 7h1v1h-1zM8 8h1v1h-1zM10 8h1v1h-1zM12 8h1v1h-1zM6 9h1v1h-1zM9 9h1v1h-1zM11 9h1v1h-1zM14 9h1v1h-1zM7 10h1v1h-1zM13 10h1v1h-1zM6 11h1v1h-1zM14 11h1v1h-1zM7 12h1v1h-1zM13 12h1v1h-1zM6 13h1v1h-1zM9 13h1v1h-1zM11 13h1v1h-1zM14 13h1v1h-1zM8 14h1v1h-1zM10 14h1v1h-1zM12 14h1v1h-1zM8 15h1v1h-1zM10 15h1v1h-1zM12 15h1v1h-1z"/><path fill="#808080" d="M9 7h1v1h-1zM11 7h1v1h-1zM7 8h1v1h-1zM9 8h1v1h-1zM11 8h1v1h-1zM13 8h1v1h-1zM7 9h1v1h-1zM13 9h1v1h-1zM6 10h1v1h-1zM14 10h1v1h-1zM7 11h1v1h-1zM13 11h1v1h-1zM6 12h1v1h-1zM14 12h1v1h-1zM7 13h1v1h-1zM13 13h1v1h-1zM7 14h1v1h-1zM9 14h1v1h-1zM11 14h1v1h-1zM13 14h1v1h-1zM9 15h1v1h-1zM11 15h1v1h-1z"/><path fill="#d0d0d0" d="M10 9h1v1h-1zM8 10h1v1h-1zM12 10h1v1h-1zM8 12h1v1h-1zM12 12h1v1h-1zM10 13h1v1h-1z"/></svg>
<svg style="left:9px;top:67px" width="10" height="10" shape-rendering="crispEdges"><path fill="#000000" d="M3 0h4v1h-4zM3 1h1v1h-1zM6 1h1v1h-1zM3 2h1v1h-1zM6 2h1v1h-1zM0 3h4v1h-4zM6 3h4v1h-4zM0 4h1v1h-1zM9 4h1v1h-1zM0 5h1v1h-1zM9 5h1v1h-1zM0 6h4v1h-4zM6 6h4v1h-4zM3 7h1v1h-1zM6 7h1v1h-1zM3 8h1v1h-1zM6 8h1v1h-1zM3 9h4v1h-4z"/><path fill="#ffffff" d="M4 1h2v1h-2zM4 2h2v1h-2zM4 3h2v1h-2zM1 4h8v1h-8zM1 5h8v1h-8zM4 6h2v1h-2zM4 7h2v1h-2zM4 8h2v1h-2z"/></svg>
<svg style="left:35px;top:70px" width="11" height="4" shape-rendering="crispEdges"><path fill="#000000" d="M0 0h11v1h-11zM0 1h1v1h-1zM10 1h1v1h-1zM0 2h1v1h-1zM10 2h1v1h-1zM0 3h11v1h-11z"/><path fill="#ffffff" d="M1 1h9v1h-9zM1 2h9v1h-9z"/></svg>
<svg style="left:150px;top:64px" width="14" height="13" shape-rendering="crispEdges"><path fill="#ffffff" d="M5 3h8v1h-8zM4 4h1v1h-1zM13 4h1v1h-1zM4 5h1v1h-1zM13 5h1v1h-1zM4 6h1v1h-1zM7 6h1v1h-1zM13 6h1v1h-1zM4 7h1v1h-1zM13 7h1v1h-1zM4 8h1v1h-1zM13 8h1v1h-1zM4 9h1v1h-1zM13 9h1v1h-1zM4 10h3v1h-3zM9 10h4v1h-4zM5 11h1v1h-1zM12 11h1v1h-1zM5 12h8v1h-8z"/><path fill="#000000" d="M5 4h8v1h-8zM5 5h1v1h-1zM12 5h1v1h-1zM5 6h1v1h-1zM12 6h1v1h-1zM5 7h1v1h-1zM12 7h1v1h-1zM5 8h1v1h-1zM12 8h1v1h-1zM5 9h8v1h-8zM7 10h2v1h-2zM6 11h6v1h-6z"/><path fill="#c0c0c0" d="M6 5h6v1h-6zM6 6h1v1h-1zM11 6h1v1h-1zM6 7h1v1h-1zM11 7h1v1h-1zM6 8h6v1h-6z"/><path fill="#008080" d="M8 6h3v1h-3zM7 7h4v1h-4z"/></svg>
<svg style="left:245px;top:61px" width="19" height="18" shape-rendering="crispEdges"><path fill="#000000" d="M3 3h1v1h-1zM5 3h1v1h-1zM7 3h1v1h-1zM9 3h1v1h-1zM11 3h1v1h-1zM13 3h1v1h-1zM15 3h1v1h-1zM3 5h1v1h-1zM15 5h1v1h-1zM3 7h1v1h-1zM15 7h1v1h-1zM3 9h1v1h-1zM15 9h1v1h-1zM3 11h1v1h-1zM5 11h1v1h-1zM7 11h1v1h-1zM9 11h1v1h-1zM11 11h1v1h-1zM13 11h1v1h-1zM15 11h1v1h-1zM15 12h2v1h-2zM15 13h1v1h-1zM17 13h1v1h-1zM15 14h1v1h-1zM18 14h1v1h-1zM15 15h1v1h-1zM17 15h1v1h-1zM15 16h2v1h-2zM18 16h1v1h-1zM18 17h1v1h-1z"/><path fill="#ffffff" d="M16 13h1v1h-1zM16 14h2v1h-2zM16 15h1v1h-1zM17 16h1v1h-1z"/></svg>
<svg style="left:278px;top:61px" width="15" height="20" shape-rendering="crispEdges"><path fill="#000000" d="M11 4h3v1h-3zM10 5h1v1h-1zM14 5h1v1h-1zM10 6h1v1h-1zM14 6h1v1h-1zM9 7h1v1h-1zM13 7h1v1h-1zM9 8h1v1h-1zM12 8h1v1h-1zM8 9h1v1h-1zM12 9h1v1h-1zM8 10h1v1h-1zM11 10h1v1h-1zM7 11h1v1h-1zM11 11h1v1h-1zM7 12h1v1h-1zM10 12h1v1h-1zM6 13h1v1h-1zM10 13h1v1h-1zM6 14h1v1h-1zM9 14h1v1h-1zM6 15h1v1h-1zM9 15h1v1h-1zM6 16h1v1h-1zM8 16h1v1h-1zM6 17h1v1h-1zM8 17h1v1h-1zM6 18h2v1h-2zM6 19h1v1h-1z"/><path fill="#ffffff" d="M11 5h1v1h-1zM13 5h1v1h-1zM11 6h1v1h-1zM13 6h1v1h-1zM10 7h1v1h-1zM12 7h1v1h-1zM10 8h1v1h-1zM9 9h1v1h-1zM11 9h1v1h-1zM9 10h1v1h-1zM8 11h1v1h-1zM10 11h1v1h-1zM8 12h1v1h-1zM7 13h1v1h-1zM9 13h1v1h-1zM7 14h1v1h-1z"/><path fill="#dcdcdc" d="M12 5h1v1h-1zM12 6h1v1h-1zM11 7h1v1h-1zM11 8h1v1h-1zM10 9h1v1h-1zM10 10h1v1h-1zM9 11h1v1h-1zM9 12h1v1h-1zM8 13h1v1h-1zM8 14h1v1h-1zM8 15h1v1h-1z"/><path fill="#808080" d="M7 15h1v1h-1zM7 16h1v1h-1zM7 17h1v1h-1z"/></svg>
<svg style="left:312px;top:66px" width="11" height="11" shape-rendering="crispEdges"><path fill="#000000" d="M0 0h2v1h-2zM1 1h2v1h-2zM2 2h2v1h-2zM3 3h2v1h-2zM4 4h2v1h-2zM5 5h2v1h-2zM6 6h2v1h-2zM7 7h2v1h-2zM8 8h2v1h-2zM9 9h2v1h-2zM10 10h1v1h-1z"/></svg>
<svg style="left:338px;top:61px" width="17" height="19" shape-rendering="crispEdges"><path fill="#000000" d="M13 3h1v1h-1zM16 3h1v1h-1zM13 4h1v1h-1zM16 4h1v1h-1zM12 5h1v1h-1zM15 5h1v1h-1zM12 6h1v1h-1zM15 6h1v1h-1zM11 7h1v1h-1zM14 7h1v1h-1zM11 8h1v1h-1zM14 8h1v1h-1zM10 9h1v1h-1zM13 9h1v1h-1zM9 10h1v1h-1zM13 10h1v1h-1zM8 11h1v1h-1zM13 11h1v1h-1zM7 12h1v1h-1zM13 12h1v1h-1zM6 13h1v1h-1zM12 13h2v1h-2zM6 14h1v1h-1zM11 14h1v1h-1zM5 15h1v1h-1zM10 15h1v1h-1zM4 16h1v1h-1zM8 16h2v1h-2zM3 17h1v1h-1zM6 17h2v1h-2zM3 18h3v1h-3z"/><path fill="#c0c0c0" d="M10 10h3v1h-3zM9 11h2v1h-2zM8 12h2v1h-2zM7 13h2v1h-2zM7 14h1v1h-1zM6 15h1v1h-1zM5 16h1v1h-1zM4 17h1v1h-1z"/><path fill="#808080" d="M11 11h2v1h-2zM10 12h3v1h-3zM9 13h3v1h-3zM8 14h3v1h-3zM7 15h3v1h-3zM6 16h2v1h-2zM5 17h1v1h-1z"/></svg>
<svg style="left:368px;top:61px" width="18" height="16" shape-rendering="crispEdges"><path fill="#505050" d="M11 4h5v1h-5z"/><path fill="#000000" d="M10 5h1v1h-1zM16 5h1v1h-1zM9 6h1v1h-1zM16 6h1v1h-1zM8 7h1v1h-1zM16 7h1v1h-1zM7 8h1v1h-1zM16 8h1v1h-1zM6 9h1v1h-1zM16 9h1v1h-1zM5 10h1v1h-1zM15 10h1v1h-1zM4 11h1v1h-1zM14 11h1v1h-1zM5 12h1v1h-1zM13 12h1v1h-1zM6 13h1v1h-1zM12 13h1v1h-1zM7 14h1v1h-1zM11 14h1v1h-1zM8 15h9v1h-9z"/><path fill="#ffffff" d="M11 5h5v1h-5zM10 6h6v1h-6zM9 7h6v1h-6zM8 8h6v1h-6zM7 9h6v1h-6zM6 10h6v1h-6zM6 11h5v1h-5zM7 12h3v1h-3z"/><path fill="#c0c0c0" d="M15 7h1v1h-1zM14 8h1v1h-1zM13 9h1v1h-1zM12 10h1v1h-1zM5 11h1v1h-1zM11 11h1v1h-1zM6 12h1v1h-1zM10 12h1v1h-1zM7 13h3v1h-3zM8 14h2v1h-2z"/><path fill="#808080" d="M15 8h1v1h-1zM14 9h2v1h-2zM13 10h2v1h-2zM12 11h2v1h-2zM11 12h2v1h-2zM10 13h2v1h-2zM10 14h1v1h-1z"/><path fill="#a8a8a8" d="M17 15h1v1h-1z"/></svg>
<svg style="left:400px;top:61px" width="18" height="18" shape-rendering="crispEdges"><path fill="#000000" d="M11 4h4v1h-4zM10 5h1v1h-1zM15 5h1v1h-1zM9 6h1v1h-1zM16 6h1v1h-1zM4 7h7v1h-7zM17 7h1v1h-1zM4 8h1v1h-1zM10 8h1v1h-1zM17 8h1v1h-1zM4 9h1v1h-1zM10 9h1v1h-1zM17 9h1v1h-1zM4 10h1v1h-1zM9 10h4v1h-4zM17 10h1v1h-1zM4 11h1v1h-1zM8 11h1v1h-1zM13 11h1v1h-1zM16 11h1v1h-1zM4 12h1v1h-1zM7 12h1v1h-1zM14 12h2v1h-2zM4 13h1v1h-1zM7 13h1v1h-1zM14 13h1v1h-1zM4 14h4v1h-4zM14 14h1v1h-1zM7 15h1v1h-1zM14 15h1v1h-1zM8 16h1v1h-1zM13 16h1v1h-1zM9 17h4v1h-4z"/><path fill="#d0d0d0" d="M11 5h4v1h-4zM10 6h6v1h-6zM11 7h6v1h-6zM11 8h6v1h-6zM11 9h6v1h-6zM13 10h4v1h-4zM14 11h2v1h-2z"/><path fill="#ffffff" d="M5 8h5v1h-5zM5 9h5v1h-5zM5 10h4v1h-4zM5 11h3v1h-3zM5 12h2v1h-2zM5 13h2v1h-2z"/><path fill="#909090" d="M9 11h4v1h-4zM8 12h6v1h-6zM8 13h6v1h-6zM8 14h6v1h-6zM8 15h6v1h-6zM9 16h4v1h-4z"/></svg>
<svg style="left:432px;top:61px" width="18" height="18" shape-rendering="crispEdges"><path fill="#000000" d="M4 4h12v1h-12zM4 5h1v1h-1zM15 5h1v1h-1zM3 6h2v1h-2zM15 6h2v1h-2zM3 7h2v1h-2zM15 7h2v1h-2zM4 8h1v1h-1zM15 8h1v1h-1zM4 9h2v1h-2zM14 9h2v1h-2zM4 10h1v1h-1zM6 10h2v1h-2zM12 10h2v1h-2zM15 10h1v1h-1zM4 11h1v1h-1zM8 11h4v1h-4zM15 11h1v1h-1zM4 12h1v1h-1zM15 12h1v1h-1zM4 13h1v1h-1zM15 13h1v1h-1zM4 14h1v1h-1zM15 14h1v1h-1zM4 15h1v1h-1zM15 15h1v1h-1zM4 16h1v1h-1zM15 16h1v1h-1zM5 17h10v1h-10z"/><path fill="#ffffff" d="M5 5h10v1h-10zM6 6h1v1h-1zM8 6h2v1h-2zM11 6h1v1h-1zM13 6h1v1h-1zM8 7h2v1h-2zM9 8h1v1h-1z"/><path fill="#c0c0c0" d="M5 6h1v1h-1zM7 6h1v1h-1zM10 6h1v1h-1zM12 6h1v1h-1zM14 6h1v1h-1zM5 7h3v1h-3zM10 7h5v1h-5zM5 8h4v1h-4zM10 8h5v1h-5zM6 9h8v1h-8zM5 10h1v1h-1zM8 10h4v1h-4zM14 10h1v1h-1zM5 11h3v1h-3zM12 11h3v1h-3zM5 12h10v1h-10zM6 13h8v1h-8zM5 14h10v1h-10zM6 15h8v1h-8zM5 16h10v1h-10z"/><path fill="#808080" d="M5 13h1v1h-1zM14 13h1v1h-1zM5 15h1v1h-1zM14 15h1v1h-1z"/></svg>
<svg style="left:463px;top:61px" width="16" height="17" shape-rendering="crispEdges"><path fill="#000000" d="M4 5h12v1h-12zM4 6h2v1h-2zM9 6h2v1h-2zM14 6h2v1h-2zM4 7h1v1h-1zM9 7h2v1h-2zM15 7h1v1h-1zM4 8h1v1h-1zM9 8h2v1h-2zM15 8h1v1h-1zM9 9h2v1h-2zM9 10h2v1h-2zM9 11h2v1h-2zM9 12h2v1h-2zM9 13h2v1h-2zM9 14h2v1h-2zM9 15h2v1h-2zM7 16h6v1h-6z"/></svg>
<svg style="left:494px;top:61px" width="18" height="19" shape-rendering="crispEdges"><path fill="#000000" d="M14 3h2v1h-2zM13 4h4v1h-4zM12 5h1v1h-1zM14 5h4v1h-4zM12 6h1v1h-1zM14 6h4v1h-4zM11 7h6v1h-6zM10 8h6v1h-6zM9 9h1v1h-1zM11 9h4v1h-4zM8 10h1v1h-1zM11 10h3v1h-3zM7 11h1v1h-1zM10 11h1v1h-1zM12 11h1v1h-1zM6 12h1v1h-1zM9 12h1v1h-1zM5 13h1v1h-1zM8 13h1v1h-1zM4 14h1v1h-1zM7 14h1v1h-1zM3 15h1v1h-1zM6 15h1v1h-1zM2 16h1v1h-1zM5 16h1v1h-1zM2 17h1v1h-1zM4 17h1v1h-1zM3 18h1v1h-1z"/><path fill="#808080" d="M13 5h1v1h-1zM13 6h1v1h-1z"/><path fill="#ffffff" d="M10 9h1v1h-1zM9 10h1v1h-1zM8 11h1v1h-1zM7 12h1v1h-1zM6 13h1v1h-1zM5 14h1v1h-1zM4 15h1v1h-1zM3 16h1v1h-1z"/><path fill="#c0c0c0" d="M10 10h1v1h-1zM9 11h1v1h-1zM8 12h1v1h-1zM7 13h1v1h-1zM6 14h1v1h-1zM5 15h1v1h-1zM4 16h1v1h-1zM3 17h1v1h-1z"/></svg>
<svg style="left:524px;top:61px" width="18" height="18" shape-rendering="crispEdges"><path fill="#a0a0a0" d="M10 3h1v1h-1zM10 4h1v1h-1zM7 5h1v1h-1zM10 5h1v1h-1zM13 5h1v1h-1zM8 6h1v1h-1zM10 6h1v1h-1zM12 6h1v1h-1zM5 8h4v1h-4zM10 8h1v1h-1zM12 8h4v1h-4zM10 9h2v1h-2zM8 10h1v1h-1zM10 10h3v1h-3zM7 11h1v1h-1zM10 11h4v1h-4zM10 12h5v1h-5zM10 13h6v1h-6zM10 14h2v1h-2zM13 14h1v1h-1zM10 15h1v1h-1zM13 15h2v1h-2zM14 16h1v1h-1zM14 17h1v1h-1z"/></svg>
<svg style="left:248px;top:99px" width="9" height="9" shape-rendering="crispEdges"><path fill="#000000" d="M0 0h9v1h-9zM0 1h9v1h-9zM0 2h9v1h-9zM0 3h9v1h-9zM0 4h9v1h-9zM0 5h9v1h-9zM0 6h9v1h-9zM0 7h9v1h-9zM0 8h9v1h-9z"/></svg>
<svg style="left:269px;top:98px" width="9" height="9" shape-rendering="crispEdges"><path fill="#000000" d="M3 0h3v1h-3zM3 1h3v1h-3zM3 2h3v1h-3zM0 3h3v1h-3zM6 3h3v1h-3zM0 4h3v1h-3zM6 4h3v1h-3zM0 5h3v1h-3zM6 5h3v1h-3zM3 6h3v1h-3zM3 7h3v1h-3zM3 8h3v1h-3z"/></svg>
<svg style="left:291px;top:98px" width="9" height="9" shape-rendering="crispEdges"><path fill="#000000" d="M0 0h3v1h-3zM6 0h3v1h-3zM0 1h3v1h-3zM6 1h3v1h-3zM0 2h3v1h-3zM6 2h3v1h-3zM3 3h3v1h-3zM3 4h3v1h-3zM3 5h3v1h-3zM0 6h3v1h-3zM6 6h3v1h-3zM0 7h3v1h-3zM6 7h3v1h-3zM0 8h3v1h-3zM6 8h3v1h-3z"/></svg>
<svg style="left:593px;top:484px" width="16" height="17" shape-rendering="crispEdges"><path fill="#ffffff" d="M15 4h1v1h-1zM14 5h1v1h-1zM13 6h1v1h-1zM12 7h1v1h-1zM11 8h1v1h-1zM15 8h1v1h-1zM10 9h1v1h-1zM14 9h1v1h-1zM9 10h1v1h-1zM13 10h1v1h-1zM8 11h1v1h-1zM12 11h1v1h-1zM7 12h1v1h-1zM11 12h1v1h-1zM15 12h1v1h-1zM6 13h1v1h-1zM10 13h1v1h-1zM14 13h1v1h-1zM5 14h1v1h-1zM9 14h1v1h-1zM13 14h1v1h-1zM4 15h1v1h-1zM8 15h1v1h-1zM12 15h1v1h-1zM3 16h1v1h-1zM7 16h1v1h-1zM11 16h1v1h-1z"/><path fill="#909090" d="M15 5h1v1h-1zM14 6h2v1h-2zM13 7h2v1h-2zM12 8h2v1h-2zM11 9h2v1h-2zM15 9h1v1h-1zM10 10h2v1h-2zM14 10h2v1h-2zM9 11h2v1h-2zM13 11h2v1h-2zM8 12h2v1h-2zM12 12h2v1h-2zM7 13h2v1h-2zM11 13h2v1h-2zM15 13h1v1h-1zM6 14h2v1h-2zM10 14h2v1h-2zM14 14h2v1h-2zM5 15h2v1h-2zM9 15h2v1h-2zM13 15h2v1h-2zM4 16h2v1h-2zM8 16h2v1h-2zM12 16h2v1h-2z"/></svg>
<svg style="left:0px;top:0px" width="10" height="15" shape-rendering="crispEdges"><path fill="#ffffff" d="M1 3h2v1h-2zM4 3h2v1h-2zM7 3h2v1h-2zM1 4h2v1h-2zM4 4h2v1h-2zM7 4h2v1h-2zM1 6h2v1h-2zM4 6h2v1h-2zM7 6h2v1h-2zM1 7h2v1h-2zM4 7h2v1h-2zM7 7h2v1h-2zM1 9h2v1h-2zM4 9h2v1h-2zM7 9h2v1h-2zM1 10h2v1h-2zM4 10h2v1h-2zM7 10h2v1h-2zM1 12h2v1h-2zM4 12h2v1h-2zM7 12h2v1h-2zM1 13h2v1h-2zM4 13h2v1h-2zM7 13h2v1h-2z"/><path fill="#000000" d="M0 4h1v1h-1zM3 4h1v1h-1zM6 4h1v1h-1zM9 4h1v1h-1zM0 5h1v1h-1zM2 5h2v1h-2zM5 5h2v1h-2zM8 5h2v1h-2zM0 7h1v1h-1zM3 7h1v1h-1zM6 7h1v1h-1zM9 7h1v1h-1zM0 8h1v1h-1zM2 8h2v1h-2zM5 8h2v1h-2zM8 8h2v1h-2zM0 10h1v1h-1zM3 10h1v1h-1zM6 10h1v1h-1zM9 10h1v1h-1zM0 11h1v1h-1zM2 11h2v1h-2zM5 11h2v1h-2zM8 11h2v1h-2zM0 13h1v1h-1zM3 13h1v1h-1zM6 13h1v1h-1zM9 13h1v1h-1zM0 14h1v1h-1zM2 14h2v1h-2zM5 14h2v1h-2zM8 14h2v1h-2z"/></svg>
<svg style="left:16px;top:-1px" width="76" height="18" shape-rendering="crispEdges"><path fill="#000" fill-opacity="0.9" d="M27 2h1v1h-1zM32 2h1v1h-1zM54 2h1v1h-1zM66 2h1v1h-1zM15 3h1v1h-1zM27 3h1v1h-1zM30 3h1v1h-1zM31 3h1v1h-1zM32 3h1v1h-1zM33 3h1v1h-1zM34 3h1v1h-1zM35 3h1v1h-1zM39 3h1v1h-1zM43 3h1v1h-1zM44 3h1v1h-1zM45 3h1v1h-1zM46 3h1v1h-1zM47 3h1v1h-1zM51 3h1v1h-1zM52 3h1v1h-1zM53 3h1v1h-1zM54 3h1v1h-1zM55 3h1v1h-1zM56 3h1v1h-1zM57 3h1v1h-1zM58 3h1v1h-1zM62 3h1v1h-1zM63 3h1v1h-1zM64 3h1v1h-1zM65 3h1v1h-1zM66 3h1v1h-1zM67 3h1v1h-1zM68 3h1v1h-1zM69 3h1v1h-1zM70 3h1v1h-1zM71 3h1v1h-1zM2 4h1v1h-1zM3 4h1v1h-1zM4 4h1v1h-1zM5 4h1v1h-1zM6 4h1v1h-1zM7 4h1v1h-1zM8 4h1v1h-1zM9 4h1v1h-1zM10 4h1v1h-1zM11 4h1v1h-1zM15 4h1v1h-1zM19 4h1v1h-1zM20 4h1v1h-1zM21 4h1v1h-1zM22 4h1v1h-1zM23 4h1v1h-1zM27 4h1v1h-1zM30 4h1v1h-1zM35 4h1v1h-1zM39 4h1v1h-1zM43 4h1v1h-1zM47 4h1v1h-1zM53 4h1v1h-1zM62 4h1v1h-1zM71 4h1v1h-1zM2 5h1v1h-1zM6 5h1v1h-1zM11 5h1v1h-1zM15 5h1v1h-1zM26 5h1v1h-1zM28 5h1v1h-1zM30 5h1v1h-1zM35 5h1v1h-1zM38 5h1v1h-1zM39 5h1v1h-1zM40 5h1v1h-1zM41 5h1v1h-1zM43 5h1v1h-1zM44 5h1v1h-1zM45 5h1v1h-1zM46 5h1v1h-1zM47 5h1v1h-1zM53 5h1v1h-1zM62 5h1v1h-1zM63 5h1v1h-1zM64 5h1v1h-1zM65 5h1v1h-1zM66 5h1v1h-1zM67 5h1v1h-1zM68 5h1v1h-1zM69 5h1v1h-1zM71 5h1v1h-1zM2 6h1v1h-1zM5 6h1v1h-1zM6 6h1v1h-1zM7 6h1v1h-1zM8 6h1v1h-1zM9 6h1v1h-1zM11 6h1v1h-1zM14 6h1v1h-1zM15 6h1v1h-1zM16 6h1v1h-1zM17 6h1v1h-1zM26 6h1v1h-1zM28 6h1v1h-1zM30 6h1v1h-1zM31 6h1v1h-1zM32 6h1v1h-1zM33 6h1v1h-1zM34 6h1v1h-1zM35 6h1v1h-1zM39 6h1v1h-1zM40 6h1v1h-1zM50 6h1v1h-1zM51 6h1v1h-1zM52 6h1v1h-1zM53 6h1v1h-1zM54 6h1v1h-1zM55 6h1v1h-1zM56 6h1v1h-1zM57 6h1v1h-1zM58 6h1v1h-1zM59 6h1v1h-1zM66 6h1v1h-1zM2 7h1v1h-1zM3 7h1v1h-1zM4 7h1v1h-1zM5 7h1v1h-1zM8 7h1v1h-1zM11 7h1v1h-1zM15 7h1v1h-1zM27 7h1v1h-1zM30 7h1v1h-1zM31 7h1v1h-1zM32 7h1v1h-1zM33 7h1v1h-1zM34 7h1v1h-1zM35 7h1v1h-1zM38 7h1v1h-1zM40 7h1v1h-1zM42 7h1v1h-1zM43 7h1v1h-1zM44 7h1v1h-1zM45 7h1v1h-1zM46 7h1v1h-1zM47 7h1v1h-1zM52 7h1v1h-1zM63 7h1v1h-1zM64 7h1v1h-1zM65 7h1v1h-1zM66 7h1v1h-1zM70 7h1v1h-1zM2 8h1v1h-1zM6 8h1v1h-1zM7 8h1v1h-1zM11 8h1v1h-1zM15 8h1v1h-1zM16 8h1v1h-1zM18 8h1v1h-1zM19 8h1v1h-1zM20 8h1v1h-1zM21 8h1v1h-1zM22 8h1v1h-1zM23 8h1v1h-1zM26 8h1v1h-1zM30 8h1v1h-1zM32 8h1v1h-1zM34 8h1v1h-1zM35 8h1v1h-1zM38 8h1v1h-1zM39 8h1v1h-1zM40 8h1v1h-1zM41 8h1v1h-1zM43 8h1v1h-1zM47 8h1v1h-1zM52 8h1v1h-1zM53 8h1v1h-1zM54 8h1v1h-1zM55 8h1v1h-1zM56 8h1v1h-1zM57 8h1v1h-1zM58 8h1v1h-1zM62 8h1v1h-1zM66 8h1v1h-1zM67 8h1v1h-1zM69 8h1v1h-1zM2 9h1v1h-1zM3 9h1v1h-1zM4 9h1v1h-1zM5 9h1v1h-1zM8 9h1v1h-1zM9 9h1v1h-1zM10 9h1v1h-1zM11 9h1v1h-1zM14 9h1v1h-1zM15 9h1v1h-1zM17 9h1v1h-1zM21 9h1v1h-1zM26 9h1v1h-1zM27 9h1v1h-1zM28 9h1v1h-1zM30 9h1v1h-1zM32 9h1v1h-1zM34 9h1v1h-1zM35 9h1v1h-1zM40 9h1v1h-1zM43 9h1v1h-1zM44 9h1v1h-1zM45 9h1v1h-1zM46 9h1v1h-1zM47 9h1v1h-1zM57 9h1v1h-1zM64 9h1v1h-1zM65 9h1v1h-1zM67 9h1v1h-1zM68 9h1v1h-1zM69 9h1v1h-1zM2 10h1v1h-1zM6 10h1v1h-1zM7 10h1v1h-1zM8 10h1v1h-1zM11 10h1v1h-1zM14 10h1v1h-1zM15 10h1v1h-1zM19 10h1v1h-1zM21 10h1v1h-1zM22 10h1v1h-1zM29 10h1v1h-1zM31 10h1v1h-1zM32 10h1v1h-1zM33 10h1v1h-1zM34 10h1v1h-1zM35 10h1v1h-1zM40 10h1v1h-1zM43 10h1v1h-1zM47 10h1v1h-1zM56 10h1v1h-1zM62 10h1v1h-1zM63 10h1v1h-1zM66 10h1v1h-1zM67 10h1v1h-1zM69 10h1v1h-1zM2 11h1v1h-1zM4 11h1v1h-1zM5 11h1v1h-1zM6 11h1v1h-1zM11 11h1v1h-1zM13 11h1v1h-1zM15 11h1v1h-1zM18 11h1v1h-1zM21 11h1v1h-1zM23 11h1v1h-1zM27 11h1v1h-1zM28 11h1v1h-1zM29 11h1v1h-1zM30 11h1v1h-1zM32 11h1v1h-1zM34 11h1v1h-1zM35 11h1v1h-1zM37 11h1v1h-1zM38 11h1v1h-1zM39 11h1v1h-1zM40 11h1v1h-1zM41 11h1v1h-1zM43 11h1v1h-1zM44 11h1v1h-1zM45 11h1v1h-1zM46 11h1v1h-1zM47 11h1v1h-1zM52 11h1v1h-1zM53 11h1v1h-1zM54 11h1v1h-1zM55 11h1v1h-1zM56 11h1v1h-1zM65 11h1v1h-1zM67 11h1v1h-1zM70 11h1v1h-1zM2 12h1v1h-1zM7 12h1v1h-1zM8 12h1v1h-1zM11 12h1v1h-1zM15 12h1v1h-1zM18 12h1v1h-1zM21 12h1v1h-1zM23 12h1v1h-1zM26 12h1v1h-1zM29 12h1v1h-1zM30 12h1v1h-1zM32 12h1v1h-1zM34 12h1v1h-1zM35 12h1v1h-1zM40 12h1v1h-1zM43 12h1v1h-1zM47 12h1v1h-1zM48 12h1v1h-1zM55 12h1v1h-1zM56 12h1v1h-1zM62 12h1v1h-1zM63 12h1v1h-1zM64 12h1v1h-1zM67 12h1v1h-1zM71 12h1v1h-1zM2 13h1v1h-1zM3 13h1v1h-1zM4 13h1v1h-1zM5 13h1v1h-1zM6 13h1v1h-1zM7 13h1v1h-1zM8 13h1v1h-1zM9 13h1v1h-1zM10 13h1v1h-1zM11 13h1v1h-1zM15 13h1v1h-1zM21 13h1v1h-1zM29 13h1v1h-1zM35 13h1v1h-1zM40 13h1v1h-1zM42 13h1v1h-1zM43 13h1v1h-1zM44 13h1v1h-1zM45 13h1v1h-1zM46 13h1v1h-1zM47 13h1v1h-1zM57 13h1v1h-1zM65 13h1v1h-1zM66 13h1v1h-1zM67 13h1v1h-1zM2 14h1v1h-1zM11 14h1v1h-1zM15 14h1v1h-1zM19 14h1v1h-1zM20 14h1v1h-1zM40 14h1v1h-1zM47 14h1v1h-1z"/></svg>
<div style="position:absolute;left:507px;top:14px;width:102px;height:1px;background:#b4cbee"></div>
<div style="position:absolute;left:508px;top:-10px;width:56px;height:24px;box-sizing:border-box;border:1px solid #34455e;border-right:none;border-radius:0 0 0 5px;background:linear-gradient(180deg,#c9d8ee 0,#b8cae6 13px,#7f98c6 14px,#819dca 19px,#90abd4 21px,#a8c0e2 22px);overflow:hidden"><div style="position:absolute;left:0;top:0;width:1px;height:22px;background:rgba(255,255,255,.55)"></div><div style="position:absolute;left:0;top:21px;width:60px;height:1px;background:rgba(255,255,255,.55)"></div></div>
<div style="position:absolute;left:536px;top:0;width:1px;height:13px;background:#3a4b64"></div>
<div style="position:absolute;left:537px;top:0;width:1px;height:13px;background:#d8e4f4"></div>
<div style="position:absolute;left:563px;top:-10px;width:50px;height:24px;box-sizing:border-box;border:1px solid #4a1410;border-right:none;background:linear-gradient(180deg,#e6b0a8 0,#d8928a 13px,#c44c38 14px,#b63826 19px,#c45444 20px,#d88c7c 21px,#e6b2a6 22px);"><div style="position:absolute;left:0;top:0;width:1px;height:22px;background:rgba(255,220,210,.6)"></div></div>
<div style="position:absolute;left:517px;top:4px;width:12px;height:5px;box-sizing:border-box;border:1px solid #3c4656;border-radius:1px;background:#f4f2ee"></div>
<div style="position:absolute;left:544px;top:-4px;width:12px;height:13px;box-sizing:border-box;border:1px solid #3c4656;border-radius:1px;background:#f4f2ee"></div>
<div style="position:absolute;left:547px;top:2px;width:6px;height:4px;box-sizing:border-box;border:1px solid #3c4656;background:#8ea8d2"></div>
<svg style="left:578px;top:-5px" width="20" height="14"><path d="M5 12.5L14 2.5M5 2.5L14 12.5" stroke="#3a3038" stroke-width="4.4"/><path d="M5.6 12L13.4 3M5.6 3L13.4 12" stroke="#f6f4f2" stroke-width="2.4"/></svg>
</body></html>
